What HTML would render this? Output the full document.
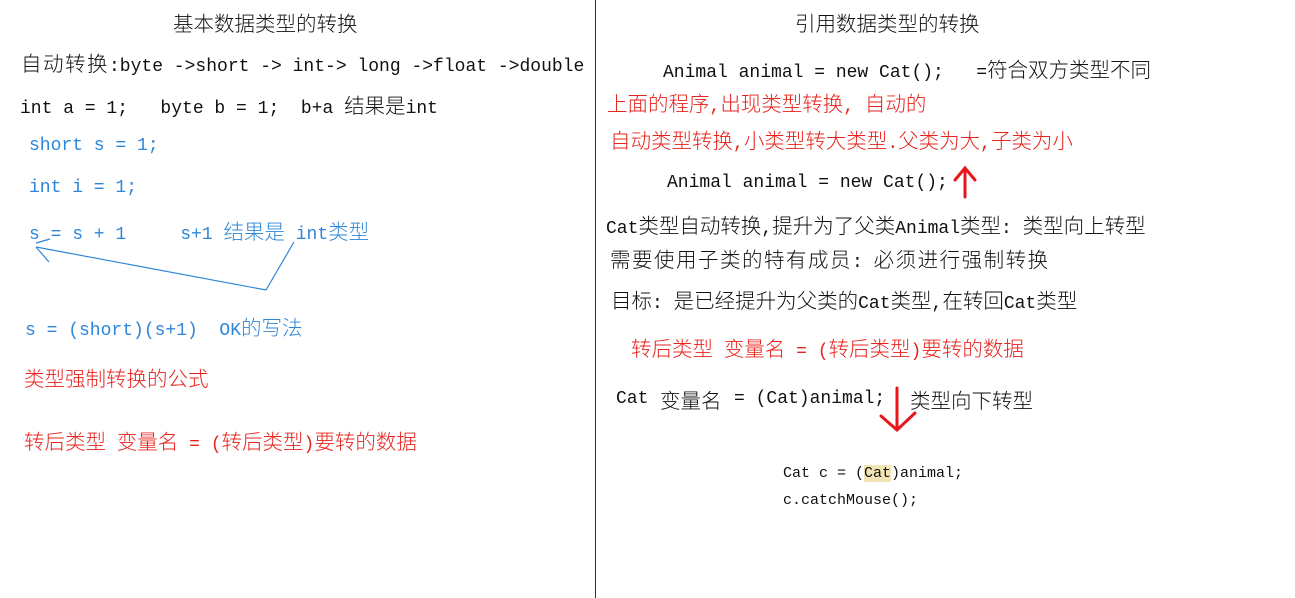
<!DOCTYPE html>
<html><head><meta charset="utf-8"><style>
body{margin:0;width:1295px;height:598px;background:#fff;position:relative;overflow:hidden;font-family:"Liberation Mono","Noto Sans CJK SC",monospace;font-size:18px;color:#111}
.l{position:absolute;white-space:pre;line-height:24px}
.c{font-family:"Noto Sans CJK SC",sans-serif;font-size:20.5px;font-weight:300}
.b{color:#2e86d9}.r{color:#e8221c}
.s{font-size:15px;line-height:18px}
</style></head><body>
<div style="position:absolute;left:595px;top:0;width:1px;height:598px;background:#333"></div>
<div class="l" style="left:173px;top:10px"><span class="c">基本数据类型的转换</span></div>
<div class="l" style="left:21px;top:50px"><span class="c" style="letter-spacing:1.5px">自动转换</span>:byte -&gt;short -&gt; int-&gt; long -&gt;float -&gt;double</div>
<div class="l" style="left:20px;top:92px">int a = 1;   byte b = 1;  b+a <span class="c">结果是</span>int</div>
<div class="l b" style="left:29px;top:134px">short s = 1;</div>
<div class="l b" style="left:29px;top:176px">int i = 1;</div>
<div class="l b" style="left:29px;top:218px">s = s + 1     s+1 <span class="c">结果是</span> int<span class="c">类型</span></div>
<div class="l b" style="left:25px;top:314px">s = (short)(s+1)  OK<span class="c">的写法</span></div>
<div class="l r" style="left:24px;top:365px"><span class="c">类型强制转换的公式</span></div>
<div class="l r" style="left:24px;top:428px"><span class="c">转后类型</span> <span class="c">变量名</span> = (<span class="c">转后类型</span>)<span class="c">要转的数据</span></div>
<svg style="position:absolute;left:0;top:0" width="600" height="300"><g stroke="#2e86d9" stroke-width="1.2" fill="none"><path d="M36 247 L266 290 L294 242"/><path d="M36 247 L49 262"/><path d="M36 243 L50 239"/></g></svg>

<div class="l" style="left:795px;top:10px"><span class="c">引用数据类型的转换</span></div>
<div class="l" style="left:663px;top:56px">Animal animal = new Cat();   =<span class="c">符合双方类型不同</span></div>
<div class="l r" style="left:607px;top:90px"><span class="c">上面的程序</span>,<span class="c">出现类型转换</span>, <span class="c">自动的</span></div>
<div class="l r" style="left:610px;top:127px"><span class="c">自动类型转换</span>,<span class="c">小类型转大类型</span>.<span class="c">父类为大</span>,<span class="c">子类为小</span></div>
<div class="l" style="left:667px;top:171px">Animal animal = new Cat();</div>
<div class="l" style="left:606px;top:212px">Cat<span class="c">类型自动转换</span>,<span class="c">提升为了父类</span>Animal<span class="c">类型</span>: <span class="c">类型向上转型</span></div>
<div class="l" style="left:610px;top:246px"><span class="c" style="letter-spacing:1.5px">需要使用子类的特有成员</span>: <span class="c" style="letter-spacing:1.5px">必须进行强制转换</span></div>
<div class="l" style="left:611px;top:287px"><span class="c">目标</span>: <span class="c">是已经提升为父类的</span>Cat<span class="c">类型</span>,<span class="c">在转回</span>Cat<span class="c">类型</span></div>
<div class="l r" style="left:631px;top:335px"><span class="c">转后类型</span> <span class="c">变量名</span> = (<span class="c">转后类型</span>)<span class="c">要转的数据</span></div>
<div class="l" style="left:616px;top:387px">Cat</div>
<div class="l" style="left:660px;top:387px"><span class="c">变量名</span></div>
<div class="l" style="left:734px;top:387px">= (Cat)animal;</div>
<div class="l" style="left:910px;top:387px"><span class="c">类型向下转型</span></div>
<div class="l s" style="left:783px;top:465px">Cat c = (<span style="background:#f3e4b5">Cat</span>)animal;</div>
<div class="l s" style="left:783px;top:492px">c.catchMouse();</div>
<svg style="position:absolute;left:0;top:0" width="1295" height="598"><g stroke="#e8161a" stroke-width="3" fill="none" stroke-linecap="round"><path d="M965 197 L965 168 M955 180 L965 168 L975 180"/><path d="M897 388 L897 430 M881 416 L897 430 L915 413"/></g></svg>
</body></html>
